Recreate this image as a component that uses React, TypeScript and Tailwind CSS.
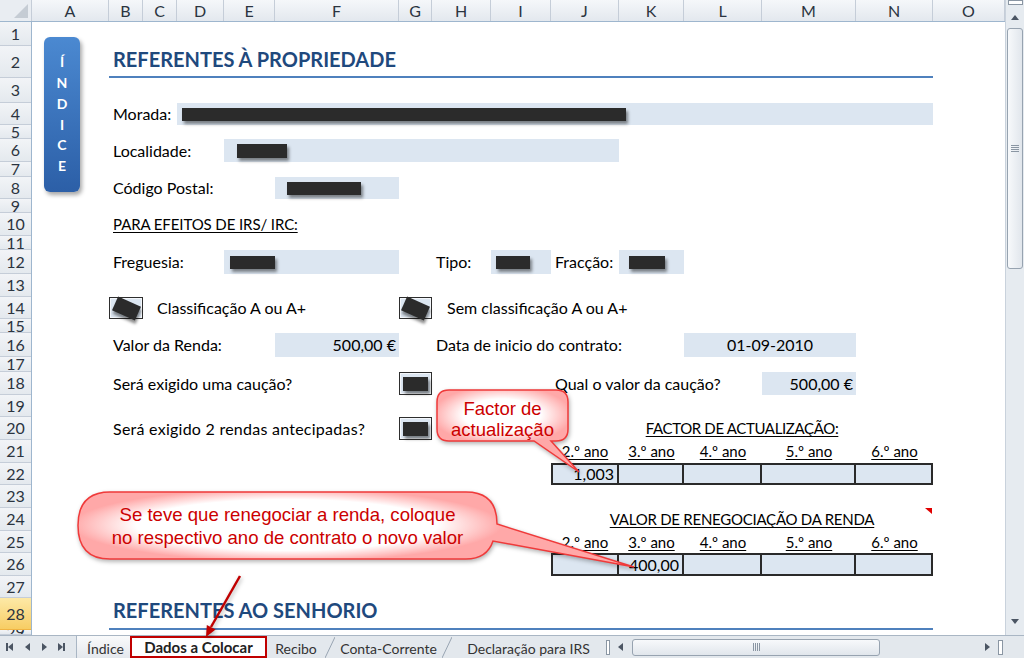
import React from 'react';

const colHeads = [
  { l: 'A', w: 'w-[77px]' },
  { l: 'B', w: 'w-[34px]' },
  { l: 'C', w: 'w-[34px]' },
  { l: 'D', w: 'w-[47px]' },
  { l: 'E', w: 'w-[51px]' },
  { l: 'F', w: 'w-[124px]' },
  { l: 'G', w: 'w-[33px]' },
  { l: 'H', w: 'w-[59px]' },
  { l: 'I', w: 'w-[60px]' },
  { l: 'J', w: 'w-[68px]' },
  { l: 'K', w: 'w-[65px]' },
  { l: 'L', w: 'w-[78px]' },
  { l: 'M', w: 'w-[94px]' },
  { l: 'N', w: 'w-[77px]' },
  { l: 'O', w: 'w-[72px]' },
];

const rowHeads = [
  'h-[24px]', 'h-[32px]', 'h-[25px]', 'h-[22px]', 'h-[14px]', 'h-[23px]', 'h-[15px]', 'h-[22px]',
  'h-[14px]', 'h-[23px]', 'h-[14px]', 'h-[24px]', 'h-[23px]', 'h-[22px]', 'h-[14px]', 'h-[24px]',
  'h-[15px]', 'h-[23px]', 'h-[22px]', 'h-[23px]', 'h-[23px]', 'h-[22px]', 'h-[23px]', 'h-[23px]',
  'h-[22px]', 'h-[23px]', 'h-[22px]', 'h-[32px]', 'h-[5px]',
];

const years = [
  { t: '2.º ano', c: 'col-start-10' },
  { t: '3.º ano', c: 'col-start-11' },
  { t: '4.º ano', c: 'col-start-12' },
  { t: '5.º ano', c: 'col-start-13' },
  { t: '6.º ano', c: 'col-start-14' },
];

function Redact({ cls }: { cls: string }) {
  return <div className={`bg-[#2b2b2b] shadow-[2px_3px_3px_rgba(0,0,0,0.45)] ${cls}`} />;
}

function CheckBox({ cls, tilted }: { cls: string; tilted?: boolean }) {
  return (
    <div className={`flex items-center justify-center border border-[#2e2e2e] bg-[#dce6f1] shadow-[inset_0_0_0_1px_#f4f7fb] ${cls}`}>
      {tilted ? (
        <Redact cls="h-[15px] w-[25px] rotate-[24deg]" />
      ) : (
        <Redact cls="h-[14px] w-[25px]" />
      )}
    </div>
  );
}

function Tri({ dir }: { dir: 'up' | 'down' | 'left' | 'right' }) {
  const pts = {
    up: '0,5 4,0 8,5',
    down: '0,0 8,0 4,5',
    left: '5,0 5,8 0,4',
    right: '0,0 0,8 5,4',
  }[dir];
  const w = dir === 'up' || dir === 'down' ? 8 : 5;
  const h = dir === 'up' || dir === 'down' ? 5 : 8;
  return (
    <svg width={w} height={h} viewBox={`0 0 ${w} ${h}`}>
      <polygon points={pts} fill="#4b5563" />
    </svg>
  );
}

function Slash() {
  return (
    <svg width="10" height="22" viewBox="0 0 10 22" className="shrink-0">
      <line x1="0" y1="22" x2="10" y2="1" stroke="#98a4b2" strokeWidth="1" />
    </svg>
  );
}

export default function App() {
  return (
    <div className="relative h-[658px] w-[1024px] overflow-hidden bg-white [font-family:Lato,sans-serif] text-[16px] text-black">
      <div className="flex h-[635px]">
        <div className="flex w-[1005px] flex-col">
          {/* column headers */}
          <div className="flex h-[22px] border-b border-[#9eb6ce]">
            <div className="flex w-[32px] items-end justify-end border-r border-[#c5cdd8] bg-[#e9edf2] p-[3px]">
              <svg width="14" height="14" viewBox="0 0 14 14">
                <polygon points="14,0 14,14 0,14" fill="#c5ccd4" />
              </svg>
            </div>
            {colHeads.map((c) => (
              <div
                key={c.l}
                className={`flex items-center justify-center border-r border-[#c5cdd8] bg-linear-to-b from-[#f5f7fa] to-[#e3e8ee] text-[16px] text-[#2b3440] ${c.w}`}
              >
                {c.l}
              </div>
            ))}
          </div>

          <div className="flex">
            {/* row headers */}
            <div className="flex w-[32px] flex-col border-r border-[#9eb6ce]">
              {rowHeads.map((h, i) =>
                i === 27 ? (
                  <div
                    key={i}
                    className={`flex items-center justify-center overflow-hidden border-b border-[#f0b443] bg-linear-to-b from-[#fde9a6] to-[#f7cd63] text-[16px] leading-none text-[#2b3440] ${h}`}
                  >
                    {i + 1}
                  </div>
                ) : (
                  <div
                    key={i}
                    className={`flex items-center justify-center overflow-hidden border-b border-[#c5cdd8] bg-linear-to-b from-[#f2f4f7] to-[#e4e9ee] text-[16px] leading-none text-[#2b3440] ${h}`}
                  >
                    {i + 1}
                  </div>
                ),
              )}
            </div>

            {/* sheet */}
            <div className="grid w-[972px] grid-cols-[77px_34px_34px_47px_51px_124px_33px_59px_60px_68px_65px_78px_94px_77px_72px] grid-rows-[24px_32px_25px_22px_14px_23px_15px_22px_14px_23px_14px_24px_23px_22px_14px_24px_15px_23px_22px_23px_23px_22px_23px_23px_22px_23px_22px_32px_5px] whitespace-nowrap">
              {/* Índice button */}
              <div className="col-start-1 row-start-1 row-end-9 ml-[12px] mt-[15px] flex h-[155px] w-[36px] flex-col items-center justify-center rounded-[6px] bg-linear-to-b from-[#4b89d1] to-[#2c5fa7] text-[14px] font-bold leading-[20.8px] text-white shadow-[2px_3px_4px_rgba(0,0,0,0.35)]">
                <span>Í</span>
                <span>N</span>
                <span>D</span>
                <span>I</span>
                <span>C</span>
                <span>E</span>
              </div>

              {/* title */}
              <div className="col-start-2 col-end-15 row-start-2 flex items-end border-b-2 border-[#4f81bd] pb-[2px] pl-1 text-[20px] font-bold text-[#1f497d]">
                REFERENTES À PROPRIEDADE
              </div>

              {/* Morada */}
              <div className="col-start-2 col-end-4 row-start-4 flex items-center pl-1">Morada:</div>
              <div className="col-start-4 col-end-15 row-start-4 flex items-center bg-[#dce6f1]">
                <Redact cls="ml-[5px] h-[13px] w-[444px]" />
              </div>

              {/* Localidade */}
              <div className="col-start-2 col-end-5 row-start-6 flex items-center pl-1">Localidade:</div>
              <div className="col-start-5 col-end-11 row-start-6 flex items-center bg-[#dce6f1]">
                <Redact cls="ml-[13px] h-[14px] w-[50px]" />
              </div>

              {/* Código Postal */}
              <div className="col-start-2 col-end-6 row-start-8 flex items-center pl-1">Código Postal:</div>
              <div className="col-start-6 col-end-7 row-start-8 flex items-center bg-[#dce6f1]">
                <Redact cls="ml-[12px] h-[13px] w-[74px]" />
              </div>

              {/* IRS */}
              <div className="col-start-2 col-end-8 row-start-10 flex items-center pl-1 text-[15px] tracking-[-0.1px] underline decoration-1 underline-offset-2">
                PARA EFEITOS DE IRS/ IRC:
              </div>

              {/* Freguesia / Tipo / Fracção */}
              <div className="col-start-2 col-end-5 row-start-12 flex items-center pl-1">Freguesia:</div>
              <div className="col-start-5 col-end-7 row-start-12 flex items-center bg-[#dce6f1]">
                <Redact cls="ml-[6px] h-[13px] w-[45px]" />
              </div>
              <div className="col-start-8 col-end-9 row-start-12 flex items-center pl-1">Tipo:</div>
              <div className="col-start-9 col-end-10 row-start-12 flex items-center bg-[#dce6f1]">
                <Redact cls="ml-[5px] h-[13px] w-[34px]" />
              </div>
              <div className="col-start-10 col-end-11 row-start-12 flex items-center pl-1">Fracção:</div>
              <div className="col-start-11 col-end-12 row-start-12 flex items-center bg-[#dce6f1]">
                <Redact cls="ml-[10px] h-[13px] w-[36px]" />
              </div>

              {/* classificação */}
              <CheckBox cls="col-start-2 col-end-3 row-start-14" tilted />
              <div className="col-start-3 col-end-7 row-start-14 flex items-center pl-[14px]">Classificação A ou A+</div>
              <CheckBox cls="col-start-7 col-end-8 row-start-14" tilted />
              <div className="col-start-8 col-end-12 row-start-14 flex items-center pl-[15px]">Sem classificação A ou A+</div>

              {/* renda */}
              <div className="col-start-2 col-end-6 row-start-16 flex items-center pl-1">Valor da Renda:</div>
              <div className="col-start-6 col-end-7 row-start-16 flex items-center justify-end bg-[#dce6f1] pr-[3px]">500,00 €</div>
              <div className="col-start-8 col-end-12 row-start-16 flex items-center pl-1">Data de inicio do contrato:</div>
              <div className="col-start-12 col-end-14 row-start-16 flex items-center justify-center bg-[#dce6f1]">01-09-2010</div>

              {/* caução */}
              <div className="col-start-2 col-end-7 row-start-18 flex items-center pl-1">Será exigido uma caução?</div>
              <CheckBox cls="col-start-7 col-end-8 row-start-18" />
              <div className="col-start-10 col-end-13 row-start-18 flex items-center pl-1">Qual o valor da caução?</div>
              <div className="col-start-13 col-end-14 row-start-18 flex items-center justify-end bg-[#dce6f1] pr-[3px]">500,00 €</div>

              {/* rendas antecipadas */}
              <div className="col-start-2 col-end-7 row-start-20 flex items-center pl-1 tracking-[0.25px]">Será exigido 2 rendas antecipadas?</div>
              <CheckBox cls="col-start-7 col-end-8 row-start-20" />
              <div className="col-start-10 col-end-15 row-start-20 flex items-center justify-center text-[15px] tracking-[-0.35px] underline decoration-1 underline-offset-2">
                FACTOR DE ACTUALIZAÇÃO:
              </div>

              {years.map((y) => (
                <div key={'a' + y.t} className={`row-start-21 flex items-center justify-center text-[15px] underline decoration-1 underline-offset-2 ${y.c}`}>
                  {y.t}
                </div>
              ))}
              {years.map((y, i) => (
                <div
                  key={'b' + y.t}
                  className={`row-start-22 flex items-center justify-end border-y-2 border-r-2 border-[#2a2a2a] bg-[#dce6f1] pr-[3px] ${i === 0 ? 'border-l-2' : ''} ${y.c}`}
                >
                  {i === 0 ? '1,003' : ''}
                </div>
              ))}

              {/* renegociação */}
              <div className="col-start-10 col-end-15 row-start-24 flex items-center justify-center text-[15px] tracking-[-0.25px] underline decoration-1 underline-offset-2">
                VALOR DE RENEGOCIAÇÃO DA RENDA
              </div>
              <div className="col-start-14 row-start-24 mr-[1px] self-start justify-self-end">
                <svg width="7" height="6" viewBox="0 0 7 6">
                  <polygon points="0,0 7,0 7,6" fill="#e00000" />
                </svg>
              </div>
              {years.map((y) => (
                <div key={'c' + y.t} className={`row-start-25 flex items-center justify-center text-[15px] underline decoration-1 underline-offset-2 ${y.c}`}>
                  {y.t}
                </div>
              ))}
              {years.map((y, i) => (
                <div
                  key={'d' + y.t}
                  className={`row-start-26 flex items-center justify-end border-y-2 border-r-2 border-[#2a2a2a] bg-[#dce6f1] pr-[3px] ${i === 0 ? 'border-l-2' : ''} ${y.c}`}
                >
                  {i === 1 ? '400,00' : ''}
                </div>
              ))}

              {/* senhorio */}
              <div className="col-start-2 col-end-15 row-start-28 flex items-end border-b-2 border-[#4f81bd] pb-[3px] pl-1 text-[20px] font-bold text-[#1f497d]">
                REFERENTES AO SENHORIO
              </div>
            </div>
          </div>
        </div>

        {/* vertical scrollbar */}
        <div className="flex w-[19px] flex-col border-l border-[#c9d2dc] bg-[#e6ebf0]">
          <div className="flex h-[7px] items-start justify-center">
            <div className="h-[5px] w-[15px] border border-[#8a96a3] bg-white" />
          </div>
          <div className="flex h-[21px] items-center justify-center">
            <Tri dir="up" />
          </div>
          <div className="mx-[1px] flex h-[241px] items-center justify-center rounded-[3px] border border-[#97a3b0] bg-linear-to-r from-[#f7f9fb] to-[#e1e6ec]">
            <div className="flex flex-col gap-[1px]">
              <div className="h-px w-[8px] bg-[#8a96a3]" />
              <div className="h-px w-[8px] bg-[#8a96a3]" />
              <div className="h-px w-[8px] bg-[#8a96a3]" />
              <div className="h-px w-[8px] bg-[#8a96a3]" />
            </div>
          </div>
          <div className="flex-1" />
          <div className="flex h-[16px] items-start justify-center">
            <Tri dir="down" />
          </div>
        </div>
      </div>

      {/* sheet tabs */}
      <div className="flex h-[23px] items-stretch border-t border-[#a9b6c4] bg-[#e3e8ed] text-[14px] text-[#333]">
        <div className="flex w-[76px] items-center">
          <div className="flex w-[19px] justify-center">
            <div className="flex items-center">
              <div className="h-[8px] w-[2px] bg-[#4b5563]" />
              <Tri dir="left" />
            </div>
          </div>
          <div className="flex w-[17px] justify-center"><Tri dir="left" /></div>
          <div className="flex w-[17px] justify-center"><Tri dir="right" /></div>
          <div className="flex w-[17px] justify-center">
            <div className="flex items-center">
              <Tri dir="right" />
              <div className="h-[8px] w-[2px] bg-[#4b5563]" />
            </div>
          </div>
        </div>
        <div className="flex w-[54px] items-center justify-center border-l border-[#a9b6c4] bg-linear-to-b from-[#f9fafb] to-[#e4e8ed] pl-[4px] pt-[2px]">
          Índice
        </div>
        <div className="flex w-[137px] items-center justify-center border-2 border-[#c00000] bg-white pt-[1px] text-[15px] font-bold text-[#222]">
          Dados a Colocar
        </div>
        <div className="flex w-[58px] items-center justify-center pt-[2px]">Recibo</div>
        <Slash />
        <div className="flex w-[107px] items-center justify-center pt-[2px]">Conta-Corrente</div>
        <Slash />
        <div className="flex w-[153px] items-center justify-center pt-[2px]">Declaração para IRS</div>
        <div className="flex w-[6px] items-center justify-center">
          <div className="h-[15px] w-[4px] border border-[#8a96a3] bg-white" />
        </div>
        <div className="flex w-[19px] items-center justify-center"><Tri dir="left" /></div>
        <div className="flex w-[348px] items-center">
          <div className="ml-[2px] flex h-[17px] w-[248px] items-center justify-center rounded-[3px] border border-[#97a3b0] bg-linear-to-b from-[#f7f9fb] to-[#e1e6ec]">
            <div className="flex gap-[1px]">
              <div className="h-[8px] w-px bg-[#8a96a3]" />
              <div className="h-[8px] w-px bg-[#8a96a3]" />
              <div className="h-[8px] w-px bg-[#8a96a3]" />
              <div className="h-[8px] w-px bg-[#8a96a3]" />
            </div>
          </div>
        </div>
        <div className="flex w-[18px] items-center justify-center"><Tri dir="right" /></div>
        <div className="flex w-[9px] items-center justify-center">
          <div className="h-[15px] w-[5px] border border-[#8a96a3] bg-white" />
        </div>
        <div className="w-[19px] bg-[#e3e8ed]" />
      </div>

      {/* callouts and arrow drawn over the sheet */}
      <svg className="pointer-events-none absolute left-0 top-0" width="1024" height="658" viewBox="0 0 1024 658">
        <defs>
          <radialGradient id="g1" gradientUnits="userSpaceOnUse" cx="502" cy="415" r="70" gradientTransform="translate(502 415) scale(1 0.42) translate(-502 -415)">
            <stop offset="0" stopColor="#ffffff" />
            <stop offset="0.55" stopColor="#ffffff" />
            <stop offset="1" stopColor="#ffa8a8" />
          </radialGradient>
          <radialGradient id="g2" gradientUnits="userSpaceOnUse" cx="287" cy="525" r="215" gradientTransform="translate(287 525) scale(1 0.17) translate(-287 -525)">
            <stop offset="0" stopColor="#ffffff" />
            <stop offset="0.7" stopColor="#ffffff" />
            <stop offset="1" stopColor="#ffa8a8" />
          </radialGradient>
        </defs>
        <g style={{ filter: 'drop-shadow(1px 2px 2px rgba(0,0,0,0.3))' }}>
          <path
            d="M449 390 H556 Q568 390 568 402 V429 Q568 441 556 441 H551 L579 472 L534 441 H449 Q437 441 437 429 V402 Q437 390 449 390 Z"
            fill="url(#g1)"
            stroke="#f03a3a"
            strokeWidth="1.5"
          />
          <path
            d="M110 492 H466 Q497 492 497 524 L634 567 L493 541 Q487 559 466 559 H110 Q78 559 78 525.5 Q78 492 110 492 Z"
            fill="url(#g2)"
            stroke="#f03a3a"
            strokeWidth="1.5"
          />
          <line x1="240" y1="576" x2="211" y2="627" stroke="#c00000" strokeWidth="2.5" />
          <polygon points="206,637 215.6,629.6 206.8,624.9" fill="#c00000" />
        </g>
      </svg>
      <div className="absolute left-[437px] top-[398px] flex w-[131px] flex-col items-center text-[18.5px] leading-[21px] text-[#cc0000] [font-family:'Liberation_Sans',Arial,sans-serif]">
        <span>Factor de</span>
        <span>actualização</span>
      </div>
      <div className="absolute left-[78px] top-[503px] flex w-[419px] flex-col items-center text-[18.6px] leading-[23px] text-[#cc0000] [font-family:'Liberation_Sans',Arial,sans-serif]">
        <span>Se teve que renegociar a renda, coloque</span>
        <span>no respectivo ano de contrato o novo valor</span>
      </div>
    </div>
  );
}
